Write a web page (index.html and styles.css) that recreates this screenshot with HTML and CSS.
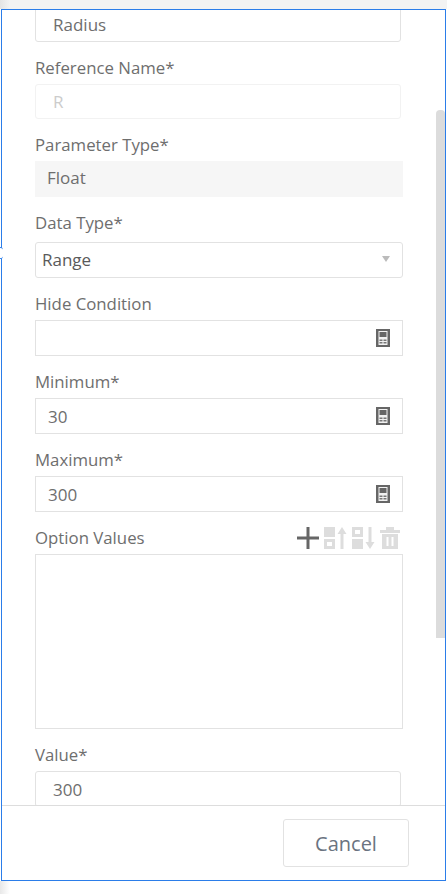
FILE: index.html
```html
<!DOCTYPE html>
<html lang="en">
<head>
<meta charset="utf-8">
<title>Parameter</title>
<link rel="stylesheet" href="styles.css">
</head>
<body>
<div class="topstrip"></div>
<div class="dialog">
  <div class="notch"></div>
  <div class="scroller">
    <form class="form">
      <div class="field">
        <div class="box narrow"><span class="val inset">Radius</span></div>
      </div>
      <div class="field">
        <div class="label">Reference Name*</div>
        <div class="box narrow faint"><span class="val inset ghost">R</span></div>
      </div>
      <div class="field">
        <div class="label">Parameter Type*</div>
        <div class="box filled"><span class="val">Float</span></div>
      </div>
      <div class="field">
        <div class="label tall">Data Type*</div>
        <div class="box select"><span class="val dark">Range</span><span class="caret"></span></div>
      </div>
      <div class="field">
        <div class="label">Hide Condition</div>
        <div class="box square"><span class="val"></span>
          <svg class="calc" viewBox="0 0 14 18"><rect width="14" height="18" fill="#666"/><rect x="2.500" y="2" width="9" height="14" fill="#f1f1f1"/><rect x="3.500" y="3" width="7" height="5" fill="#666"/><path fill="#777" d="M3.500 10.500h3v1.500h-3zM7.500 10.500h3v1.500h-3zM3.500 13h3v1.500h-3zM7.500 13h3v1.500h-3z"/></svg>
        </div>
      </div>
      <div class="field">
        <div class="label">Minimum*</div>
        <div class="box square"><span class="val">30</span>
          <svg class="calc" viewBox="0 0 14 18"><rect width="14" height="18" fill="#666"/><rect x="2.500" y="2" width="9" height="14" fill="#f1f1f1"/><rect x="3.500" y="3" width="7" height="5" fill="#666"/><path fill="#777" d="M3.500 10.500h3v1.500h-3zM7.500 10.500h3v1.500h-3zM3.500 13h3v1.500h-3zM7.500 13h3v1.500h-3z"/></svg>
        </div>
      </div>
      <div class="field">
        <div class="label">Maximum*</div>
        <div class="box square"><span class="val">300</span>
          <svg class="calc" viewBox="0 0 14 18"><rect width="14" height="18" fill="#666"/><rect x="2.500" y="2" width="9" height="14" fill="#f1f1f1"/><rect x="3.500" y="3" width="7" height="5" fill="#666"/><path fill="#777" d="M3.500 10.500h3v1.500h-3zM7.500 10.500h3v1.500h-3zM3.500 13h3v1.500h-3zM7.500 13h3v1.500h-3z"/></svg>
        </div>
      </div>
      <div class="field">
        <div class="label-row">
          <div class="label">Option Values</div>
          <div class="tools">
            <svg class="tool plus" viewBox="0 0 22 22"><path fill="#666" d="M9.500 0h3v9.500H22v3h-9.500V22h-3v-9.500H0v-3h9.500z"/></svg>
            <svg class="tool move" viewBox="0 0 23 22"><path fill="#ddd" fill-rule="evenodd" d="M0 0h11v10H0zM0 12h11v10H0zM3 15v4h5v-4z"/><path fill="#ddd" d="M18 0l4.500 7h-3v15h-3V7h-3z"/></svg>
            <svg class="tool move" viewBox="0 0 23 22"><path fill="#ddd" fill-rule="evenodd" d="M0 0h11v10H0zM3 3v4h5V3zM0 12h11v10H0z"/><path fill="#ddd" d="M18 22l4.500-7h-3V0h-3v15h-3z"/></svg>
            <svg class="tool trash" viewBox="0 0 20 22"><path fill="#ddd" fill-rule="evenodd" d="M6 0h8v3h6v3H0V3h6zM2 7h16v15H2zM6.500 10v9h2v-9zM11.500 10v9h2v-9z"/></svg>
          </div>
        </div>
        <div class="box area"></div>
      </div>
      <div class="field">
        <div class="label">Value*</div>
        <div class="box narrow"><span class="val inset">300</span></div>
      </div>
    </form>
    <div class="scrollbar"><div class="thumb"></div></div>
  </div>
  <div class="footer">
    <button type="button" class="cancel">Cancel</button>
  </div>
</div>
<div class="shade"></div>
</body>
</html>
```
FILE: styles.css
```css
html, body {
  margin: 0;
  padding: 0;
  height: 894px;
  overflow: hidden;
  background: #fff;
  font-family: "Open Sans", "Noto Sans", sans-serif;
}
.topstrip {
  height: 9px;
  background: linear-gradient(to right, #e4e4e4, #f3f3f3 10px);
}
.dialog {
  position: relative;
  box-sizing: border-box;
  width: 445px;
  height: 872px;
  margin-left: 1px;
  border: 1px solid #2b7de9;
  display: flex;
  flex-direction: column;
  background: #fff;
}
.notch {
  position: absolute;
  left: -2px;
  top: 237px;
  width: 3px;
  height: 12px;
  box-sizing: border-box;
  background: #fff;
  border-top: 1px solid #2b7de9;
  border-bottom: 1px solid #2b7de9;
  border-radius: 0 3px 3px 0;
}
.scroller {
  position: relative;
  height: 795px;
  overflow: hidden;
  border-bottom: 1px solid #ddd;
  flex: none;
}
.form {
  margin: -4px 0 0 33px;
  width: 368px;
}
.field {
  margin-bottom: 12px;
}
.label {
  height: 30px;
  line-height: 28px;
  font-size: 16.800px;
  color: #6e6e6e;
}
.tall {
  height: 33px;
}
.label-row {
  display: flex;
  justify-content: space-between;
  height: 30px;
}
.tools {
  display: flex;
  align-items: center;
  gap: 5px;
  height: 22px;
  margin-top: 3px;
  padding-right: 3px;
}
.tool { display: block; height: 22px; }
.plus { width: 22px; }
.move { width: 23px; }
.trash { width: 20px; }
.box {
  box-sizing: border-box;
  height: 36px;
  border: 1px solid #e2e2e2;
  display: flex;
  align-items: center;
  justify-content: space-between;
  padding: 0 12px;
}
.narrow {
  width: 366px;
  border-radius: 3px;
}
.faint {
  height: 35px;
  border-color: #f2f2f2;
}
.filled {
  background: #f6f6f6;
  border-color: #f6f6f6;
  padding: 0 12px 4px 11px;
}
.select {
  border-radius: 3px;
  padding: 0 12px 2px 6px;
}
.area { height: 175px; }
.val {
  font-size: 17px;
  color: #6e6e6e;
}
.inset { margin-left: 5px; }
.ghost { color: #ccc; }
.dark { color: #5a5a5a; }
.caret {
  width: 0;
  height: 0;
  border-left: 4px solid transparent;
  border-right: 4px solid transparent;
  border-top: 6px solid #bbb;
}
.calc {
  width: 14px;
  height: 18px;
  flex: none;
}
.scrollbar {
  position: absolute;
  top: 0;
  right: 0;
  bottom: 0;
  width: 9px;
}
.thumb {
  margin-top: 100px;
  height: 528px;
  border-radius: 4px 4px 0 0;
  background: #dcdcdc;
}
.footer {
  flex: 1;
  display: flex;
  justify-content: flex-end;
  align-items: flex-start;
  padding: 13px 36px 0 0;
}
.cancel {
  width: 126px;
  height: 48px;
  border: 1px solid #e2e2e2;
  border-radius: 3px;
  background: #fff;
  color: #6a7380;
  font: 20px "Open Sans", "Noto Sans", sans-serif;
}
.shade {
  width: 10px;
  height: 13px;
  background: linear-gradient(to right, #e8e8e8, #fff);
}
```
